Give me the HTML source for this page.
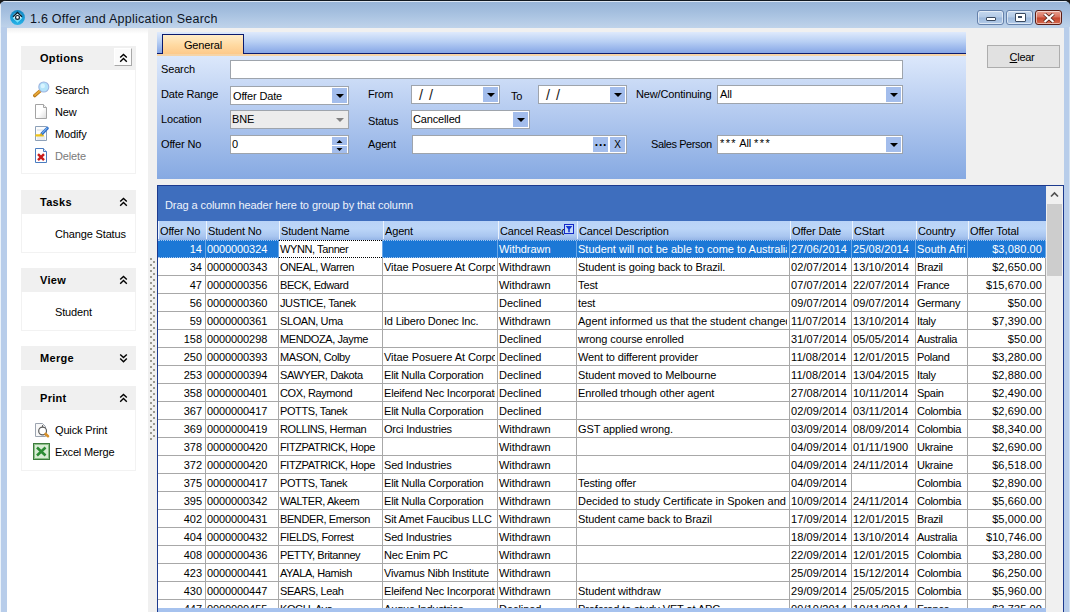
<!DOCTYPE html>
<html lang="en">
<head>
<meta charset="utf-8">
<title>1.6 Offer and Application Search</title>
<style>
html,body{margin:0;padding:0}
body{width:1070px;height:612px;overflow:hidden;position:relative;background:#1a1a1a;font-family:"Liberation Sans",sans-serif;font-size:11px;color:#000;letter-spacing:-0.15px}
div,span,i{box-sizing:border-box}
.abs,#win *{position:absolute}
#win{position:absolute;left:0;top:0;width:1070px;height:620px;border-radius:6px 6px 0 0;overflow:hidden;background:#bdd3ec;border-top:1px solid #101820}
#tbar{left:0;top:0;width:1070px;height:27px;background:linear-gradient(#98b5d8 0,#a3bede 35%,#b4cbe6 75%,#bfd3ea 100%);border-top:1px solid #dce6f2}
#frameL{left:0;top:26px;width:7px;height:600px;background:linear-gradient(90deg,#eaf2fa 0,#eaf2fa 1px,#b8cdea 1px,#b8cdea 7px)}#edgeL{left:0;top:2px;width:1px;height:30px;background:#e4eef8}
#frameR{left:1064px;top:26px;width:6px;height:600px;background:linear-gradient(90deg,#b8cdea 0,#b8cdea 5px,#d4e2f2 5px,#d4e2f2 6px)}
#title{left:30px;top:10px;font-size:12.5px;letter-spacing:.25px;white-space:nowrap;color:#0c1424;line-height:16px}
#content{left:7px;top:27px;width:1057px;height:590px;background:#f0f0f0}
#side{left:0;top:0;width:141px;height:590px;background:linear-gradient(#f0f0f0 0,#fff 6px)}
.ph{left:14px;width:115px;height:24px;background:#f0f0f0;font-weight:bold;font-size:11px;letter-spacing:0.3px}
.ph span{left:19px;top:5px;line-height:14px;white-space:nowrap}
.pb{left:14px;width:115px;background:#fff;border:1px solid #f2f2f2;border-top:none}
.chev{left:97px;top:6px;width:11px;height:12px}
.chevbtn{left:93px;top:2px;width:18px;height:18px;background:#fbfbfb;border:1px solid #fff;border-right-color:#a8a8a8;border-bottom-color:#a8a8a8}
.it{left:33px;white-space:nowrap;line-height:14px}
.ic{left:11px;width:17px;height:17px}
/* form */
#form{left:150px;top:5px;width:809px;height:146px;background:linear-gradient(#dce8fb 0,#dce8fb 23px,#dbe7fb 24px,#86a9e2 100%)}
#tabstrip{left:0;top:-1px;width:809px;height:22px;background:linear-gradient(#dfeafc 0,#b9d0f4 45%,#86a6e6 100%);border-bottom:1px solid #0a1a6e}
#tabline{left:0;top:21px;width:809px;height:2px;background:#f6d4a6;z-index:2}
#tab{left:5px;top:1px;width:82px;height:20px;border:1px solid #0a1a6e;border-bottom:none;background:linear-gradient(#ffecc8 0,#ffd9a0 55%,#fdc98a 100%);text-align:center;line-height:20px}
.lb{white-space:nowrap;line-height:14px}
.in{background:#fff;border:1px solid #9ea4ac;height:19px;line-height:16px;white-space:nowrap;padding-left:2px}
.dd{right:1px;top:1px;width:15px;height:15px;background:#a3bdec}
.dd:after{content:"";position:absolute;left:3.5px;top:6px;border:4px solid transparent;border-top:4px solid #000;border-bottom:none}
/* grid */
#grid{left:150px;top:157px;width:907px;height:440px;background:#fff;border:1px solid #1c3a8e;border-bottom:none}
#gp{left:0;top:0;width:888px;height:35px;overflow:hidden;background:#3e6ebe;color:#eef3fb;line-height:38px;padding-left:7px;white-space:nowrap;letter-spacing:-.08px}
#hdr{left:0;top:35px;width:888px;height:19px;background:linear-gradient(#b9d3f7 0,#bcd6f8 40%,#a9c6f0 80%,#94b4e6 100%)}
.hc{top:35px;height:18px;line-height:20px;white-space:nowrap;overflow:hidden;padding-left:1px;border-left:1px solid #eaf2fd}
.hc span,.st{position:static!important}
.flt{right:2px;top:3px;width:10px;height:10px;background:#c4daf8;border:1px solid #1428c8}
.flt svg{left:0;top:0}
.row{left:0;width:888px;height:18px;border-bottom:1px solid #a8a8a8}
.c{top:0;height:17px;line-height:19px;padding:0 3px 0 1px;white-space:nowrap;overflow:hidden;border-right:1px solid #a8a8a8}
.c{background:#fff}.c:after{content:"";position:absolute;right:0;top:0;width:2px;height:100%;background:inherit}
.c.r{text-align:right}
.c.r{letter-spacing:0}.c.n{letter-spacing:-.1px}.c.d,.c.m{letter-spacing:.1px}.c.nm{letter-spacing:-.4px}.c.ag{letter-spacing:-.2px}.c.rs{letter-spacing:-.05px}.c.ds{letter-spacing:-.12px}.c.ct{letter-spacing:-.3px}
.sel{background:#1c78d6;color:#fff;border-bottom:1px dotted #a8c8ee;border-top:1px dotted #a8c8ee}
.sel .c{border-right-color:#6aa6e6;top:0;height:16px;line-height:17px;background:#1c78d6}
.sel .c.foc{top:-1px;height:18px;line-height:19px;color:#000;background:repeating-linear-gradient(90deg,#000 0,#000 1px,transparent 1px,transparent 2px) 0 0/100% 1px no-repeat,repeating-linear-gradient(90deg,#000 0,#000 1px,transparent 1px,transparent 2px) 0 100%/100% 1px no-repeat,#fff}.sel .c.foc:after{background:none}
#vs{left:888px;top:0;width:17px;height:440px;background:#f0f0f0}
#vsthumb{left:1px;top:18px;width:15px;height:72px;background:#cdcdcd}
#hs{left:0;top:422px;width:888px;height:20px;background:#a6c2ee}
#split{left:143px;top:230px;width:5px;height:182px;background:linear-gradient(to bottom,#989890 0,#989890 2px,transparent 2px,transparent 6px) 0 0/2px 6px repeat-y,linear-gradient(to bottom,#989890 0,#989890 2px,transparent 2px,transparent 6px) 3px 3px/2px 6px repeat-y}
#clear{left:980px;top:17px;width:73px;height:23px;background:#e1e1e1;border:1px solid #adadad;text-align:center;line-height:23px;font-size:11px;letter-spacing:-.3px;padding-right:3px}
#clear span,#clear u{position:static!important}
.wb{top:9px;width:27px;height:15px;border:1px solid #6480aa;border-radius:3px;background:linear-gradient(#c5d8ef 0,#b3cae6 48%,#9cb8dc 52%,#b3cbe8 100%);box-shadow:inset 0 0 0 1px rgba(255,255,255,.55)}
</style>
</head>
<body>
<div id="win">
 <div id="tbar"></div>
 <div id="frameL"></div><div id="frameR"></div><div id="edgeL"></div>
 <svg class="abs" style="left:9px;top:8px" width="17" height="17" viewBox="0 0 17 17">
  <defs><linearGradient id="lg" x1="0" y1="0" x2="0" y2="1"><stop offset="0" stop-color="#1486c0"/><stop offset=".55" stop-color="#1a9cd6"/><stop offset="1" stop-color="#28b4e8"/></linearGradient></defs>
  <circle cx="8.5" cy="8.5" r="7.4" fill="url(#lg)"/>
  <ellipse cx="8.5" cy="7.8" rx="4.3" ry="3.8" fill="#e4f7ff"/>
  <path d="M4.2 8.6L8.5 12.8L12.8 8.6" fill="none" stroke="#74e0f8" stroke-width="1.3"/>
  <path d="M4 7.8L8.5 3.4L13 7.8" fill="none" stroke="#062030" stroke-width="1.4"/>
  <circle cx="8.5" cy="8.4" r="1.9" fill="#fff" stroke="#062030" stroke-width="1.2"/>
 </svg>
 <div id="title">1.6 Offer and Application Search</div>
 <!-- window buttons -->
 <div class="wb" style="left:977px"><i style="left:8px;top:6px;width:10px;height:4px;border:1px solid #3a4a60;background:#fff;border-radius:1px"></i></div>
 <div class="wb" style="left:1006px"><i style="left:8px;top:2px;width:11px;height:9px;border:1px solid #3a4a60;background:#fff;border-radius:1px"></i><i style="left:11px;top:5px;width:4px;height:2px;border:1px solid #3a4a60;background:#c0d0e4"></i></div>
 <div class="wb" style="left:1035px;border-color:#5a1c14;background:linear-gradient(#e8a090 0,#d8705c 48%,#c4442c 52%,#d46a50 100%)">
  <svg style="left:7px;top:2px" width="12" height="10" viewBox="0 0 12 10"><path d="M1.5 1L10.5 9M10.5 1L1.5 9" stroke="#4a1c14" stroke-width="3.6"/><path d="M1.5 1L10.5 9M10.5 1L1.5 9" stroke="#fff" stroke-width="2.2"/></svg>
 </div>

 <div id="content">
  <div id="side">
   <!-- Options -->
   <div class="ph" style="top:18px"><span>Options</span><i class="chevbtn"></i><svg class="chev" viewBox="0 0 11 12"><path d="M2.2 5.6L5.5 2.4L8.8 5.6M2.2 9.8L5.5 6.6L8.8 9.8" fill="none" stroke="#000" stroke-width="1.4"/></svg></div>
   <div class="pb" style="top:42px;height:104px">
    <svg class="ic" style="top:11px" viewBox="0 0 17 17"><path d="M7.3 9.7L1.8 14.6" stroke="#b87818" stroke-width="3.4" stroke-linecap="round"/><path d="M7.3 9.5L2 14.2" stroke="#e8a838" stroke-width="1.8" stroke-linecap="round"/><circle cx="10.8" cy="6" r="5" fill="#b4e4fa" stroke="#9cb4e0" stroke-width="1.1"/><circle cx="9.8" cy="5" r="2.2" fill="#d8f4ff"/></svg>
    <div class="it" style="top:13px">Search</div>
    <svg class="ic" style="top:33px" viewBox="0 0 17 17"><defs><linearGradient id="pg" x1="0" y1="0" x2="1" y2="1"><stop offset=".5" stop-color="#fff"/><stop offset="1" stop-color="#dcdcdc"/></linearGradient></defs><path d="M2.5 1.5h8l3 3v11h-11z" fill="url(#pg)" stroke="#a4a4a4"/><path d="M10.5 1.5v3h3" fill="#f4f4f4" stroke="#a4a4a4"/></svg>
    <div class="it" style="top:35px">New</div>
    <svg class="ic" style="top:55px" viewBox="0 0 17 17"><path d="M2.5 1.5h11v14h-11z" fill="#fcfcfc" stroke="#8ca0b8"/><path d="M4 5h6M4 12h8M4 14h8" stroke="#d4dce4" stroke-width="1"/><path d="M3.5 10.4h6.2" stroke="#f0c418" stroke-width="2.4" stroke-linecap="round"/><path d="M14.3 3.2L9 8.6" stroke="#2c6cc8" stroke-width="3" stroke-linecap="round"/><path d="M14 3L9.4 7.8" stroke="#78b0ec" stroke-width="1.1" stroke-linecap="round"/><path d="M8.9 8.8L7 10.4" stroke="#e0b020" stroke-width="1.6"/></svg>
    <div class="it" style="top:57px">Modify</div>
    <svg class="ic" style="top:77px" viewBox="0 0 17 17"><path d="M2.5 1.5h8l3 3v11h-11z" fill="#fff" stroke="#4a7cc0"/><path d="M10.5 1.5v3h3" fill="#e8f0fa" stroke="#4a7cc0"/><path d="M5 7.2L11 13.2M11 7.2L5 13.2" stroke="#c81c1c" stroke-width="2.4"/></svg>
    <div class="it" style="top:79px;color:#7a7a7a">Delete</div>
   </div>
   <!-- Tasks -->
   <div class="ph" style="top:162px"><span>Tasks</span><svg class="chev" viewBox="0 0 11 12"><path d="M2.2 5.6L5.5 2.4L8.8 5.6M2.2 9.8L5.5 6.6L8.8 9.8" fill="none" stroke="#000" stroke-width="1.4"/></svg></div>
   <div class="pb" style="top:186px;height:39px"><div class="it" style="top:13px">Change Status</div></div>
   <!-- View -->
   <div class="ph" style="top:240px"><span>View</span><svg class="chev" viewBox="0 0 11 12"><path d="M2.2 5.6L5.5 2.4L8.8 5.6M2.2 9.8L5.5 6.6L8.8 9.8" fill="none" stroke="#000" stroke-width="1.4"/></svg></div>
   <div class="pb" style="top:264px;height:39px"><div class="it" style="top:13px">Student</div></div>
   <!-- Merge -->
   <div class="ph" style="top:318px"><span>Merge</span><svg class="chev" viewBox="0 0 11 12"><path d="M2.2 2.4L5.5 5.6L8.8 2.4M2.2 6.6L5.5 9.8L8.8 6.6" fill="none" stroke="#000" stroke-width="1.4"/></svg></div>
   <!-- Print -->
   <div class="ph" style="top:358px"><span>Print</span><svg class="chev" viewBox="0 0 11 12"><path d="M2.2 5.6L5.5 2.4L8.8 5.6M2.2 9.8L5.5 6.6L8.8 9.8" fill="none" stroke="#000" stroke-width="1.4"/></svg></div>
   <div class="pb" style="top:382px;height:61px">
    <svg class="ic" style="top:12px" viewBox="0 0 17 17"><path d="M2.5 1.5h7l3 3v10h-10z" fill="#f8f8f8" stroke="#9ca4b0"/><circle cx="9.6" cy="9" r="3.9" fill="#fff" stroke="#5c5c5c" stroke-width="1.2"/><path d="M9.6 5V3" stroke="#5c5c5c" stroke-width="1"/><path d="M12.6 12L15 14.2" stroke="#d89028" stroke-width="2.6" stroke-linecap="round"/></svg>
    <div class="it" style="top:13px">Quick Print</div>
    <svg class="ic" style="top:33px" viewBox="0 0 17 17"><rect x=".5" y=".5" width="16" height="16" fill="#d8ecd4" stroke="#3c7c3c"/><rect x="1.5" y="1.5" width="14" height="14" fill="none" stroke="#8cc088"/><path d="M4 4.5L12.5 12.5M12.5 4.5L4 12.5" stroke="#2c8c34" stroke-width="2.6"/></svg>
    <div class="it" style="top:35px">Excel Merge</div>
   </div>
  </div>
  <div id="split"></div>

  <!-- form panel -->
  <div id="form">
   <div id="tabstrip"></div><div id="tabline"></div>
   <div id="tab">General</div>
   <div class="lb" style="left:4px;top:29px">Search</div>
   <div class="in" style="left:73px;top:27px;width:673px"></div>
   <div class="lb" style="left:4px;top:54px">Date Range</div>
   <div class="in" style="left:73px;top:53px;width:119px;line-height:18px">Offer Date<i class="dd"></i></div>
   <div class="lb" style="left:4px;top:79px">Location</div>
   <div class="in" style="left:73px;top:77px;width:119px;background:#ececec;padding-left:1px">BNE<i class="dd" style="background:none;opacity:.45"></i></div>
   <div class="lb" style="left:4px;top:104px">Offer No</div>
   <div class="in" style="left:73px;top:102px;width:119px;padding-left:1px;line-height:17px">0<i class="sp" style="right:1px;top:1px;width:15px;height:8px;background:#a3bdec"></i><i class="sp" style="right:1px;top:9px;width:15px;height:8px;background:#a3bdec;border-top:1px solid #fff"></i>
    <svg style="right:5px;top:3px" width="7" height="13" viewBox="0 0 7 13"><path d="M.5 4L3.5 1L6.5 4zM.5 9L3.5 12L6.5 9z" fill="#000"/></svg></div>
   <div class="lb" style="left:211px;top:54px">From</div>
   <div class="in" style="left:254px;top:52px;width:89px;padding-left:7px;font-size:14.5px;line-height:19px;letter-spacing:1px;color:#222">/&nbsp;/<i class="dd"></i></div>
   <div class="lb" style="left:354px;top:56px">To</div>
   <div class="in" style="left:381px;top:52px;width:89px;padding-left:7px;font-size:14.5px;line-height:19px;letter-spacing:1px;color:#222">/&nbsp;/<i class="dd"></i></div>
   <div class="lb" style="left:479px;top:54px">New/Continuing</div>
   <div class="in" style="left:560px;top:52px;width:186px;line-height:16px">All<i class="dd"></i></div>
   <div class="lb" style="left:211px;top:81px">Status</div>
   <div class="in" style="left:254px;top:77px;width:119px;padding-left:1px">Cancelled<i class="dd"></i></div>
   <div class="lb" style="left:211px;top:104px">Agent</div>
   <div class="in" style="left:255px;top:102px;width:215px"><i style="right:18px;top:1px;width:15px;height:15px;background:#a3bdec;text-align:center;font-style:normal;font-weight:bold;font-size:12px;line-height:10px;letter-spacing:.8px;padding-left:1px">...</i><i style="right:1px;top:1px;width:15px;height:15px;background:#a3bdec;text-align:center;font-style:normal;line-height:16px;font-size:10px">X</i></div>
   <div class="lb" style="left:494px;top:104px;letter-spacing:-.4px">Sales Person</div>
   <div class="in" style="left:560px;top:102px;width:186px;line-height:15px"><span class="st" style="letter-spacing:1.4px">***</span> All <span class="st" style="letter-spacing:1.4px">***</span><i class="dd"></i></div>
  </div>
  <div id="clear"><span><u>C</u>lear</span></div>

  <!-- grid -->
  <div id="grid">
   <div id="gp">Drag a column header here to group by that column</div>
   <div id="hdr"></div>
<div class="hc" style="left:0px;width:47px"><span>Offer No</span></div>
<div class="hc" style="left:48px;width:72px"><span>Student No</span></div>
<div class="hc" style="left:121px;width:103px"><span>Student Name</span></div>
<div class="hc" style="left:225px;width:114px"><span>Agent</span></div>
<div class="hc" style="left:340px;width:78px"><span style="display:block;width:64px;overflow:hidden">Cancel Reason</span><i class="flt"><svg width="8" height="8" viewBox="0 0 8 8"><path d="M.6 1h6.8L4.8 4.2v3H3.2v-3z" fill="#1838d0"/></svg></i></div>
<div class="hc" style="left:419px;width:212px"><span>Cancel Description</span></div>
<div class="hc" style="left:632px;width:61px"><span>Offer Date</span></div>
<div class="hc" style="left:694px;width:63px"><span>CStart</span></div>
<div class="hc" style="left:758px;width:51px"><span>Country</span></div>
<div class="hc" style="left:810px;width:77px"><span>Offer Total</span></div>
<div class="row sel" style="top:54px"><div class="c r" style="left:0px;width:48px">14</div><div class="c n" style="left:48px;width:73px">0000000324</div><div class="c nm foc" style="left:121px;width:104px">WYNN, Tanner</div><div class="c ag" style="left:225px;width:115px"></div><div class="c rs" style="left:340px;width:79px">Withdrawn</div><div class="c ds" style="left:419px;width:213px;letter-spacing:0">Student will not be able to come to Australia</div><div class="c d" style="left:632px;width:62px">27/06/2014</div><div class="c d" style="left:694px;width:64px">25/08/2014</div><div class="c ct" style="left:758px;width:52px;letter-spacing:.1px">South Africa</div><div class="c r m" style="left:810px;width:78px">$3,080.00</div></div>
<div class="row" style="top:72px"><div class="c r" style="left:0px;width:48px">34</div><div class="c n" style="left:48px;width:73px">0000000343</div><div class="c nm" style="left:121px;width:104px">ONEAL, Warren</div><div class="c ag" style="left:225px;width:115px;letter-spacing:-.05px">Vitae Posuere At Corporation</div><div class="c rs" style="left:340px;width:79px">Withdrawn</div><div class="c ds" style="left:419px;width:213px">Student is going back to Brazil.</div><div class="c d" style="left:632px;width:62px">02/07/2014</div><div class="c d" style="left:694px;width:64px">13/10/2014</div><div class="c ct" style="left:758px;width:52px">Brazil</div><div class="c r m" style="left:810px;width:78px">$2,650.00</div></div>
<div class="row" style="top:90px"><div class="c r" style="left:0px;width:48px">47</div><div class="c n" style="left:48px;width:73px">0000000356</div><div class="c nm" style="left:121px;width:104px">BECK, Edward</div><div class="c ag" style="left:225px;width:115px"></div><div class="c rs" style="left:340px;width:79px">Withdrawn</div><div class="c ds" style="left:419px;width:213px">Test</div><div class="c d" style="left:632px;width:62px">07/07/2014</div><div class="c d" style="left:694px;width:64px">22/07/2014</div><div class="c ct" style="left:758px;width:52px">France</div><div class="c r m" style="left:810px;width:78px">$15,670.00</div></div>
<div class="row" style="top:108px"><div class="c r" style="left:0px;width:48px">56</div><div class="c n" style="left:48px;width:73px">0000000360</div><div class="c nm" style="left:121px;width:104px">JUSTICE, Tanek</div><div class="c ag" style="left:225px;width:115px"></div><div class="c rs" style="left:340px;width:79px">Declined</div><div class="c ds" style="left:419px;width:213px">test</div><div class="c d" style="left:632px;width:62px">09/07/2014</div><div class="c d" style="left:694px;width:64px">09/07/2014</div><div class="c ct" style="left:758px;width:52px">Germany</div><div class="c r m" style="left:810px;width:78px">$50.00</div></div>
<div class="row" style="top:126px"><div class="c r" style="left:0px;width:48px">59</div><div class="c n" style="left:48px;width:73px">0000000361</div><div class="c nm" style="left:121px;width:104px">SLOAN, Uma</div><div class="c ag" style="left:225px;width:115px">Id Libero Donec Inc.</div><div class="c rs" style="left:340px;width:79px">Withdrawn</div><div class="c ds" style="left:419px;width:213px;letter-spacing:0">Agent informed us that the student changed</div><div class="c d" style="left:632px;width:62px">11/07/2014</div><div class="c d" style="left:694px;width:64px">13/10/2014</div><div class="c ct" style="left:758px;width:52px">Italy</div><div class="c r m" style="left:810px;width:78px">$7,390.00</div></div>
<div class="row" style="top:144px"><div class="c r" style="left:0px;width:48px">158</div><div class="c n" style="left:48px;width:73px">0000000298</div><div class="c nm" style="left:121px;width:104px">MENDOZA, Jayme</div><div class="c ag" style="left:225px;width:115px"></div><div class="c rs" style="left:340px;width:79px">Declined</div><div class="c ds" style="left:419px;width:213px">wrong course enrolled</div><div class="c d" style="left:632px;width:62px">31/07/2014</div><div class="c d" style="left:694px;width:64px">05/05/2014</div><div class="c ct" style="left:758px;width:52px">Australia</div><div class="c r m" style="left:810px;width:78px">$50.00</div></div>
<div class="row" style="top:162px"><div class="c r" style="left:0px;width:48px">250</div><div class="c n" style="left:48px;width:73px">0000000393</div><div class="c nm" style="left:121px;width:104px">MASON, Colby</div><div class="c ag" style="left:225px;width:115px;letter-spacing:-.05px">Vitae Posuere At Corporation</div><div class="c rs" style="left:340px;width:79px">Declined</div><div class="c ds" style="left:419px;width:213px">Went to different provider</div><div class="c d" style="left:632px;width:62px">11/08/2014</div><div class="c d" style="left:694px;width:64px">12/01/2015</div><div class="c ct" style="left:758px;width:52px">Poland</div><div class="c r m" style="left:810px;width:78px">$3,280.00</div></div>
<div class="row" style="top:180px"><div class="c r" style="left:0px;width:48px">253</div><div class="c n" style="left:48px;width:73px">0000000394</div><div class="c nm" style="left:121px;width:104px">SAWYER, Dakota</div><div class="c ag" style="left:225px;width:115px">Elit Nulla Corporation</div><div class="c rs" style="left:340px;width:79px">Declined</div><div class="c ds" style="left:419px;width:213px">Student moved to Melbourne</div><div class="c d" style="left:632px;width:62px">11/08/2014</div><div class="c d" style="left:694px;width:64px">13/04/2015</div><div class="c ct" style="left:758px;width:52px">Italy</div><div class="c r m" style="left:810px;width:78px">$2,880.00</div></div>
<div class="row" style="top:198px"><div class="c r" style="left:0px;width:48px">358</div><div class="c n" style="left:48px;width:73px">0000000401</div><div class="c nm" style="left:121px;width:104px">COX, Raymond</div><div class="c ag" style="left:225px;width:115px">Eleifend Nec Incorporated</div><div class="c rs" style="left:340px;width:79px">Declined</div><div class="c ds" style="left:419px;width:213px">Enrolled trhough other agent</div><div class="c d" style="left:632px;width:62px">27/08/2014</div><div class="c d" style="left:694px;width:64px">10/11/2014</div><div class="c ct" style="left:758px;width:52px">Spain</div><div class="c r m" style="left:810px;width:78px">$2,490.00</div></div>
<div class="row" style="top:216px"><div class="c r" style="left:0px;width:48px">367</div><div class="c n" style="left:48px;width:73px">0000000417</div><div class="c nm" style="left:121px;width:104px">POTTS, Tanek</div><div class="c ag" style="left:225px;width:115px">Elit Nulla Corporation</div><div class="c rs" style="left:340px;width:79px">Declined</div><div class="c ds" style="left:419px;width:213px"></div><div class="c d" style="left:632px;width:62px">02/09/2014</div><div class="c d" style="left:694px;width:64px">03/11/2014</div><div class="c ct" style="left:758px;width:52px">Colombia</div><div class="c r m" style="left:810px;width:78px">$2,690.00</div></div>
<div class="row" style="top:234px"><div class="c r" style="left:0px;width:48px">369</div><div class="c n" style="left:48px;width:73px">0000000419</div><div class="c nm" style="left:121px;width:104px">ROLLINS, Herman</div><div class="c ag" style="left:225px;width:115px">Orci Industries</div><div class="c rs" style="left:340px;width:79px">Withdrawn</div><div class="c ds" style="left:419px;width:213px">GST applied wrong.</div><div class="c d" style="left:632px;width:62px">03/09/2014</div><div class="c d" style="left:694px;width:64px">08/09/2014</div><div class="c ct" style="left:758px;width:52px">Colombia</div><div class="c r m" style="left:810px;width:78px">$8,340.00</div></div>
<div class="row" style="top:252px"><div class="c r" style="left:0px;width:48px">378</div><div class="c n" style="left:48px;width:73px">0000000420</div><div class="c nm" style="left:121px;width:104px">FITZPATRICK, Hope</div><div class="c ag" style="left:225px;width:115px"></div><div class="c rs" style="left:340px;width:79px">Withdrawn</div><div class="c ds" style="left:419px;width:213px"></div><div class="c d" style="left:632px;width:62px">04/09/2014</div><div class="c d" style="left:694px;width:64px">01/11/1900</div><div class="c ct" style="left:758px;width:52px">Ukraine</div><div class="c r m" style="left:810px;width:78px">$2,690.00</div></div>
<div class="row" style="top:270px"><div class="c r" style="left:0px;width:48px">372</div><div class="c n" style="left:48px;width:73px">0000000420</div><div class="c nm" style="left:121px;width:104px">FITZPATRICK, Hope</div><div class="c ag" style="left:225px;width:115px">Sed Industries</div><div class="c rs" style="left:340px;width:79px">Withdrawn</div><div class="c ds" style="left:419px;width:213px"></div><div class="c d" style="left:632px;width:62px">04/09/2014</div><div class="c d" style="left:694px;width:64px">24/11/2014</div><div class="c ct" style="left:758px;width:52px">Ukraine</div><div class="c r m" style="left:810px;width:78px">$6,518.00</div></div>
<div class="row" style="top:288px"><div class="c r" style="left:0px;width:48px">375</div><div class="c n" style="left:48px;width:73px">0000000417</div><div class="c nm" style="left:121px;width:104px">POTTS, Tanek</div><div class="c ag" style="left:225px;width:115px">Elit Nulla Corporation</div><div class="c rs" style="left:340px;width:79px">Withdrawn</div><div class="c ds" style="left:419px;width:213px">Testing offer</div><div class="c d" style="left:632px;width:62px">04/09/2014</div><div class="c d" style="left:694px;width:64px"></div><div class="c ct" style="left:758px;width:52px">Colombia</div><div class="c r m" style="left:810px;width:78px">$2,890.00</div></div>
<div class="row" style="top:306px"><div class="c r" style="left:0px;width:48px">395</div><div class="c n" style="left:48px;width:73px">0000000342</div><div class="c nm" style="left:121px;width:104px">WALTER, Akeem</div><div class="c ag" style="left:225px;width:115px">Elit Nulla Corporation</div><div class="c rs" style="left:340px;width:79px">Withdrawn</div><div class="c ds" style="left:419px;width:213px;letter-spacing:0">Decided to study Certificate in Spoken and Written</div><div class="c d" style="left:632px;width:62px">10/09/2014</div><div class="c d" style="left:694px;width:64px">24/11/2014</div><div class="c ct" style="left:758px;width:52px">Colombia</div><div class="c r m" style="left:810px;width:78px">$5,660.00</div></div>
<div class="row" style="top:324px"><div class="c r" style="left:0px;width:48px">402</div><div class="c n" style="left:48px;width:73px">0000000431</div><div class="c nm" style="left:121px;width:104px">BENDER, Emerson</div><div class="c ag" style="left:225px;width:115px">Sit Amet Faucibus LLC</div><div class="c rs" style="left:340px;width:79px">Withdrawn</div><div class="c ds" style="left:419px;width:213px">Student came back to Brazil</div><div class="c d" style="left:632px;width:62px">17/09/2014</div><div class="c d" style="left:694px;width:64px">12/01/2015</div><div class="c ct" style="left:758px;width:52px">Brazil</div><div class="c r m" style="left:810px;width:78px">$5,000.00</div></div>
<div class="row" style="top:342px"><div class="c r" style="left:0px;width:48px">404</div><div class="c n" style="left:48px;width:73px">0000000432</div><div class="c nm" style="left:121px;width:104px">FIELDS, Forrest</div><div class="c ag" style="left:225px;width:115px">Sed Industries</div><div class="c rs" style="left:340px;width:79px">Withdrawn</div><div class="c ds" style="left:419px;width:213px"></div><div class="c d" style="left:632px;width:62px">18/09/2014</div><div class="c d" style="left:694px;width:64px">13/10/2014</div><div class="c ct" style="left:758px;width:52px">Australia</div><div class="c r m" style="left:810px;width:78px">$10,746.00</div></div>
<div class="row" style="top:360px"><div class="c r" style="left:0px;width:48px">408</div><div class="c n" style="left:48px;width:73px">0000000436</div><div class="c nm" style="left:121px;width:104px">PETTY, Britanney</div><div class="c ag" style="left:225px;width:115px">Nec Enim PC</div><div class="c rs" style="left:340px;width:79px">Withdrawn</div><div class="c ds" style="left:419px;width:213px"></div><div class="c d" style="left:632px;width:62px">22/09/2014</div><div class="c d" style="left:694px;width:64px">12/01/2015</div><div class="c ct" style="left:758px;width:52px">Colombia</div><div class="c r m" style="left:810px;width:78px">$3,280.00</div></div>
<div class="row" style="top:378px"><div class="c r" style="left:0px;width:48px">423</div><div class="c n" style="left:48px;width:73px">0000000441</div><div class="c nm" style="left:121px;width:104px">AYALA, Hamish</div><div class="c ag" style="left:225px;width:115px">Vivamus Nibh Institute</div><div class="c rs" style="left:340px;width:79px">Withdrawn</div><div class="c ds" style="left:419px;width:213px"></div><div class="c d" style="left:632px;width:62px">25/09/2014</div><div class="c d" style="left:694px;width:64px">15/12/2014</div><div class="c ct" style="left:758px;width:52px">Colombia</div><div class="c r m" style="left:810px;width:78px">$6,250.00</div></div>
<div class="row" style="top:396px"><div class="c r" style="left:0px;width:48px">430</div><div class="c n" style="left:48px;width:73px">0000000447</div><div class="c nm" style="left:121px;width:104px">SEARS, Leah</div><div class="c ag" style="left:225px;width:115px">Eleifend Nec Incorporated</div><div class="c rs" style="left:340px;width:79px">Withdrawn</div><div class="c ds" style="left:419px;width:213px">Student withdraw</div><div class="c d" style="left:632px;width:62px">29/09/2014</div><div class="c d" style="left:694px;width:64px">25/05/2015</div><div class="c ct" style="left:758px;width:52px">Colombia</div><div class="c r m" style="left:810px;width:78px">$5,960.00</div></div>
<div class="row" style="top:414px"><div class="c r" style="left:0px;width:48px">447</div><div class="c n" style="left:48px;width:73px">0000000455</div><div class="c nm" style="left:121px;width:104px">KOCH, Ava</div><div class="c ag" style="left:225px;width:115px">Augue Industries</div><div class="c rs" style="left:340px;width:79px">Declined</div><div class="c ds" style="left:419px;width:213px">Prefered to study VET at APC</div><div class="c d" style="left:632px;width:62px">09/10/2014</div><div class="c d" style="left:694px;width:64px">10/11/2014</div><div class="c ct" style="left:758px;width:52px">France</div><div class="c r m" style="left:810px;width:78px">$3,735.00</div></div>
   <div id="vs"><svg style="left:4px;top:5px" width="9" height="7" viewBox="0 0 9 7"><path d="M1 5.5L4.5 2L8 5.5" fill="none" stroke="#505050" stroke-width="1.7"/></svg><div id="vsthumb"></div></div>
   <div id="hs"></div>
  </div>
 </div>
</div>
</body>
</html>
